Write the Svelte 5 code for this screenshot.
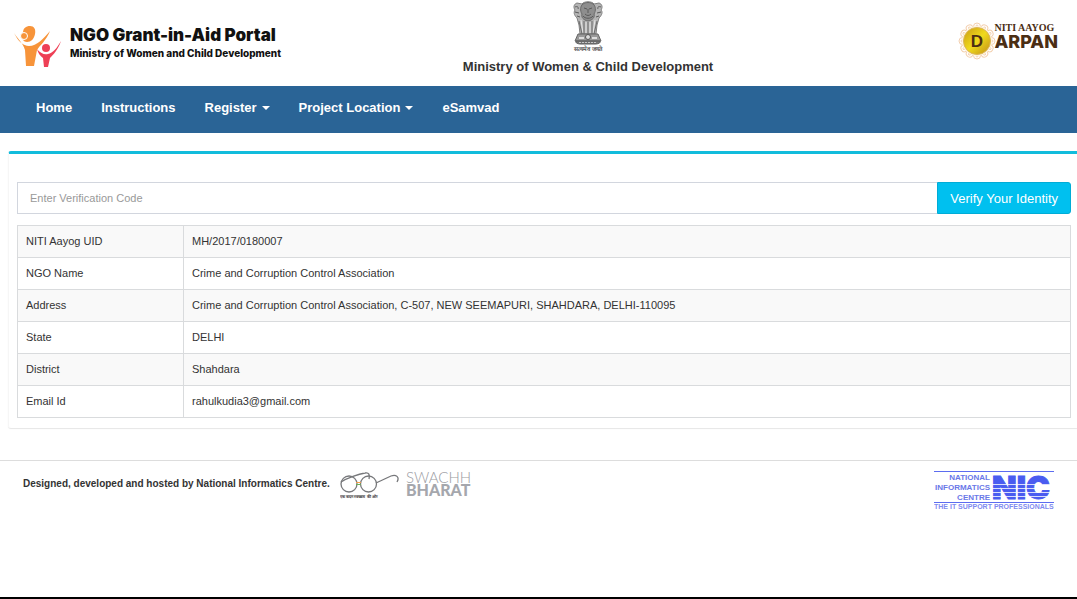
<script lang="ts">
  const menu = [
    { label: 'Home', caret: false },
    { label: 'Instructions', caret: false },
    { label: 'Register', caret: true },
    { label: 'Project Location', caret: true },
    { label: 'eSamvad', caret: false }
  ];

  const details = [
    ['NITI Aayog UID', 'MH/2017/0180007'],
    ['NGO Name', 'Crime and Corruption Control Association'],
    ['Address', 'Crime and Corruption Control Association, C-507, NEW SEEMAPURI, SHAHDARA, DELHI-110095'],
    ['State', 'DELHI'],
    ['District', 'Shahdara'],
    ['Email Id', 'rahulkudia3@gmail.com']
  ];

  const petals = Array.from({ length: 12 }, (_, i) => i * 30);
  let code = $state('');
</script>

<div class="page">
  <header class="top">
    <a class="brand" href="#home">
      <svg class="brand-mark" viewBox="0 0 48 44" aria-hidden="true">
        <path fill="#f7943a" d="M0 8C4 16 9 21 15 21C23 21 29 14 36 6C32 16 26 20 23 25L20 41H12L11 25C9 18 4 14 0 8Z" />
        <path fill="#f7943a" d="M9 8C9 3 12 1 16 1C20 1 22 4 21 9C20 14 17 17 13 17C11 17 10 16 9 15Z" />
        <circle cx="10" cy="11" r="3.5" fill="#f7943a" stroke="#fff" />
        <circle cx="32" cy="23" r="4" fill="#ee4056" />
        <path fill="#ee4056" d="M23 24C26 28 30 30 34 29C39 28 43 23 47 16C44 25 39 30 36 33L34 42H30L29 33C26 31 24 28 23 24Z" />
      </svg>
      <span class="brand-text">
        <strong>NGO Grant-in-Aid Portal</strong>
        <span>Ministry of Women and Child Development</span>
      </span>
    </a>

    <div class="ministry">
      <svg class="emblem" viewBox="0 0 32 50" role="img" aria-label="State Emblem of India">
        <path fill="#b4b4b4" stroke="#808080" d="M5 2C2 3 1 6 3 9C1 12 3 15 5 17L7 24L8 33H24L25 24L27 17C30 14 31 11 29 9C31 6 30 3 27 2L22 3C20 0 12 0 10 3Z" />
        <path fill="#8e8e8e" stroke="#6a6a6a" d="M11 3C8 5 8 10 10 13C9 16 11 19 16 20C21 19 23 16 22 13C24 10 24 5 21 3C18 1 14 1 11 3Z" />
        <path fill="none" stroke="#5a5a5a" d="M12 7L15 8M17 8L20 7M16 8V12M13 13C15 15 17 15 19 13M11 15C13 18 19 18 21 15M3 6C5 5 7 6 6 8M29 6C27 5 25 6 26 8M3 11L7 12M29 11L25 12M5 15L8 16M27 15L24 16" />
        <path fill="none" stroke="#e6e6e6" d="M9 19L11 32M23 19L21 32M14 21V32M18 21V32" />
        <path fill="none" stroke="#6c6c6c" d="M7 20L10 33M25 20L22 33M12 20L12 33M20 20L20 33M16 21V33" />
        <path fill="#999" stroke="#666" d="M6 33H26L29 40H3Z" />
        <circle cx="16" cy="36" r="2.5" fill="#ddd" stroke="#555" />
        <path fill="none" stroke="#ddd" stroke-width="2" d="M7 37H12M20 37H25" />
        <path fill="#777" stroke="#5c5c5c" d="M4 40H28C29 42 26 43 23 43H9C6 43 3 42 4 40Z" />
        <path fill="none" stroke="#c5c5c5" stroke-dasharray="2 1" d="M7 41.5H25" />
        <text x="16" y="50" text-anchor="middle" class="motto">सत्यमेव जयते</text>
      </svg>
      <h1>Ministry of Women &amp; Child Development</h1>
    </div>

    <a class="arpan" href="#arpan">
      <svg viewBox="-1 0 40 38" aria-hidden="true">
        <defs>
          <linearGradient id="gold" x1="0" y1="0" x2="1" y2="1">
            <stop offset="0" stop-color="#c99a12" />
            <stop offset="0.5" stop-color="#f0da1c" />
            <stop offset="1" stop-color="#c08d16" />
          </linearGradient>
        </defs>
        <g fill="none" stroke="#f3cfae" stroke-width="1">
          {#each petals as angle}
            <g transform="rotate({angle} 20 19)">
              <circle cx="20" cy="4.500" r="3.500" />
              <circle cx="20" cy="4" r="1" />
            </g>
          {/each}
        </g>
        <circle cx="20" cy="19" r="15" fill="#fdf3df" />
        <circle cx="20" cy="19" r="13.500" fill="url(#gold)" stroke="#dcb65a" />
        <text x="20" y="25" text-anchor="middle" class="coin">D</text>
      </svg>
      <span class="arpan-text">
        <span>NITI AAYOG</span>
        <strong>ARPAN</strong>
      </span>
    </a>
  </header>

  <nav>
    <ul>
      {#each menu as item}
        <li><a href="#menu">{item.label}{#if item.caret}<i class="caret"></i>{/if}</a></li>
      {/each}
    </ul>
  </nav>

  <main>
    <form onsubmit={(e) => e.preventDefault()}>
      <input type="text" aria-label="Enter Verification Code" placeholder="Enter Verification Code" bind:value={code} />
      <button type="submit">Verify Your Identity</button>
    </form>
    <table>
      <tbody>
        {#each details as [label, value]}
          <tr><th scope="row">{label}</th><td>{value}</td></tr>
        {/each}
      </tbody>
    </table>
  </main>

  <footer>
    <p>Designed, developed and hosted by National Informatics Centre.</p>
    <svg class="swachh" viewBox="0 0 134 32" role="img" aria-label="Swachh Bharat">
      <g fill="none" stroke="#77787b" stroke-width="1.3">
        <circle cx="9" cy="14" r="8" />
        <circle cx="28.500" cy="14" r="8" />
        <path d="M1 12C7 8 19 4 25 3C29 2 30 5 29 9M36 13L51 6C56 4 60 7 57 12" />
      </g>
      <path stroke="#f2a04b" d="M16 12.500H21" />
      <path stroke="#6cae57" d="M16 14.500H21" />
      <text x="19" y="28" text-anchor="middle" class="slogan">एक कदम स्वच्छता की ओर</text>
      <text x="66" y="13" class="light">SWACHH</text>
      <text x="66" y="26" class="bold">BHARAT</text>
    </svg>
    <svg class="nic" viewBox="0 0 120 40" role="img" aria-label="National Informatics Centre">
      <path stroke="#5c6cf0" d="M0 1.500H120M0 32.500H120" />
      <g class="nic-name" text-anchor="end">
        <text x="56" y="10">NATIONAL</text>
        <text x="56" y="20">INFORMATICS</text>
        <text x="56" y="30">CENTRE</text>
      </g>
      <text x="58" y="29" class="nic-big">NIC</text>
      <path stroke="#fff" stroke-width="0.8" d="M58 14.500H120M58 18.500H120M58 22.500H120M58 26.500H120" />
      <text x="0" y="39" class="nic-tag">THE IT SUPPORT PROFESSIONALS</text>
    </svg>
  </footer>
</div>

<style>
  :global(body) {
    margin: 0;
    background: #fff;
  }
  .page {
    display: flex;
    flex-direction: column;
    box-sizing: border-box;
    min-height: 100vh;
    border-bottom: 2px solid #000;
    font-family: "Liberation Sans", Arial, sans-serif;
    font-size: 11px;
    color: #333;
  }
  a {
    color: inherit;
    text-decoration: none;
  }
  .top {
    display: grid;
    grid-template-columns: 1fr auto 1fr;
    align-items: start;
    padding: 0 19px 0 14px;
    height: 86px;
  }
  .brand {
    display: flex;
    gap: 8px;
    padding-top: 25px;
    color: #111;
  }
  .brand-mark {
    width: 48px;
    height: 44px;
  }
  .brand-text {
    display: flex;
    flex-direction: column;
    font-family: Inter, sans-serif;
    font-weight: 800;
    font-size: 10px;
    line-height: 16px;
    white-space: nowrap;
  }
  .brand-text strong {
    font-size: 17px;
    font-weight: 900;
    line-height: 20px;
  }
  .ministry {
    display: flex;
    flex-direction: column;
    align-items: center;
    gap: 8px;
    padding-left: 104px;
  }
  .emblem {
    width: 32px;
    height: 50px;
    margin-top: 1px;
  }
  .motto {
    font-size: 6px;
    font-weight: 700;
    fill: #555;
  }
  h1 {
    margin: 0;
    font-size: 13px;
    line-height: 16px;
    white-space: nowrap;
  }
  .arpan {
    display: flex;
    justify-self: end;
    padding-top: 22px;
    color: #4b2e14;
  }
  .arpan svg {
    width: 40px;
    height: 38px;
    margin-right: -2px;
  }
  .coin {
    font: 700 17px "Liberation Sans", Arial, sans-serif;
    fill: #4b2e14;
  }
  .arpan-text {
    display: flex;
    flex-direction: column;
    font-family: "Liberation Serif", serif;
    font-size: 10px;
    font-weight: 700;
    line-height: 12px;
    white-space: nowrap;
  }
  .arpan-text strong {
    font-family: Inter, sans-serif;
    font-size: 18px;
    font-weight: 800;
    line-height: 16px;
  }
  nav {
    background: #2a6496;
  }
  nav ul {
    display: flex;
    gap: 1px;
    margin: 0;
    padding: 0 22px;
    list-style: none;
  }
  nav a {
    display: flex;
    align-items: center;
    gap: 5px;
    padding: 12px 14px 15px;
    color: #fff;
    font-size: 13px;
    font-weight: 700;
    line-height: 20px;
  }
  .caret {
    border: 4px solid transparent;
    border-top-color: #fff;
    border-bottom: 0;
  }
  main {
    margin: 18px 0 0 8px;
    padding: 28px 6px 10px 8px;
    border-top: 3px solid #11bcdc;
    border-left: 1px solid #f6f6f6;
    border-radius: 3px 0 0 3px;
    box-shadow: 0 1px 1px rgba(0, 0, 0, 0.1);
  }
  form {
    display: flex;
    margin-bottom: 11px;
  }
  input {
    flex: 1;
    min-width: 0;
    box-sizing: border-box;
    height: 32px;
    padding: 0 12px;
    border: 1px solid #d2d6de;
    border-right: 0;
    font: 11px "Liberation Sans", Arial, sans-serif;
    color: #555;
    outline: 0;
  }
  input::placeholder {
    color: #999;
    opacity: 1;
  }
  button {
    height: 32px;
    padding: 0 12px;
    border: 1px solid #00acd6;
    border-radius: 0 3px 3px 0;
    background: #00c0ef;
    color: #fff;
    font: 13px "Liberation Sans", Arial, sans-serif;
  }
  table {
    width: 100%;
    border-collapse: collapse;
    line-height: 15px;
  }
  th,
  td {
    padding: 8px;
    border: 1px solid #d9dbdd;
    font-weight: 400;
    text-align: left;
  }
  th {
    width: 149px;
  }
  tr:nth-child(odd) {
    background: #f9f9f9;
  }
  footer {
    display: flex;
    align-items: flex-start;
    margin-top: 32px;
    padding: 9px 23px 0;
    border-top: 1px solid #ddd;
  }
  footer p {
    margin: 6px 10px 0 0;
    font-size: 10px;
    font-weight: 700;
    line-height: 16px;
    white-space: nowrap;
  }
  .swachh {
    width: 134px;
    height: 32px;
  }
  .slogan {
    font-size: 4px;
    font-weight: 700;
    fill: #333;
  }
  .light {
    font: 300 15px Lato, sans-serif;
    fill: #9b9ca2;
  }
  .bold {
    font: 900 16px Lato, sans-serif;
    fill: #a5a7ad;
  }
  .nic {
    width: 120px;
    height: 40px;
    margin-left: auto;
  }
  .nic-name {
    font: 700 8px "Liberation Sans", Arial, sans-serif;
    fill: #6a78e8;
  }
  .nic-big {
    font: 900 32px Inter, sans-serif;
    fill: #4a5cf0;
    stroke: #4a5cf0;
    stroke-width: 1px;
  }
  .nic-tag {
    font: 700 7px "Liberation Sans", Arial, sans-serif;
    fill: #7f8bf0;
  }
</style>
